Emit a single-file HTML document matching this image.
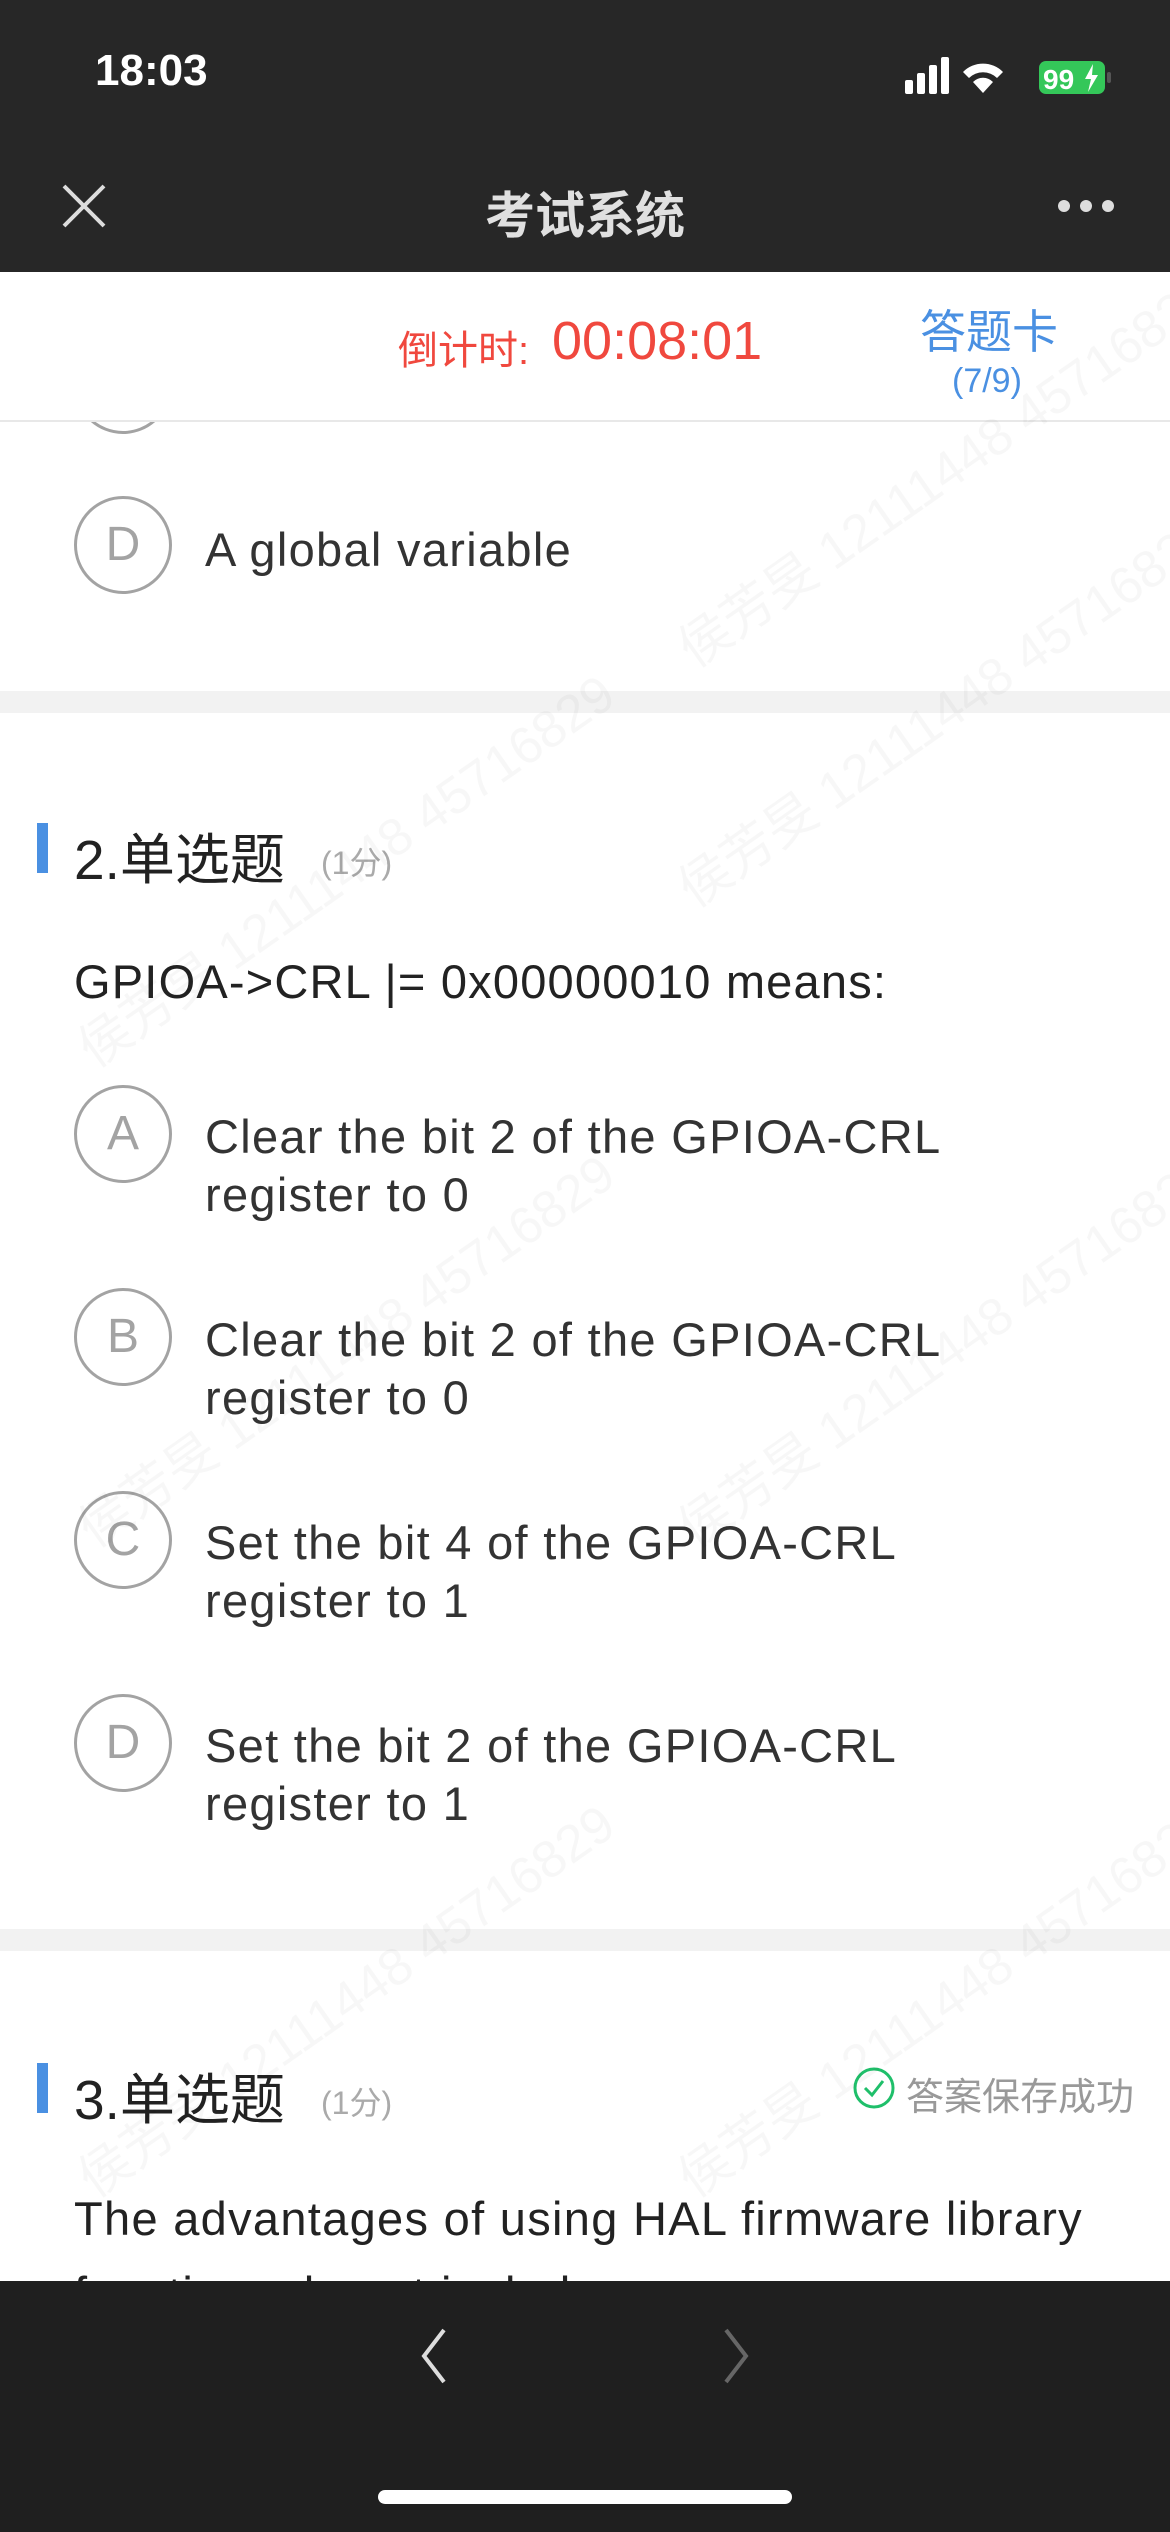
<!DOCTYPE html>
<html><head><meta charset="utf-8"><style>
*{margin:0;padding:0;box-sizing:border-box}
body{width:1170px;height:2532px;position:relative;overflow:hidden;background:#fff;font-family:"Liberation Sans","Noto Sans CJK SC",sans-serif;color:#333}
.a{position:absolute;white-space:nowrap}
.circ{position:absolute;width:98px;height:98px;border:3px solid #a3a3a3;border-radius:50%;color:#a3a3a3;font-size:48px;text-align:center;line-height:92px}
.opt{position:absolute;left:205px;font-size:47px;letter-spacing:1.3px;line-height:58px;color:#333}
.wm{position:absolute;color:rgba(0,0,0,0.03);font-size:52px;transform:rotate(-35deg);white-space:nowrap;transform-origin:left top}
</style></head><body>
<div class="a" style="left:0;top:0;width:1170px;height:272px;background:#272727"></div>
<div class="a" style="left:95px;top:46px;font-size:44px;color:#fff;font-weight:bold">18:03</div>
<svg class="a" style="left:905px;top:52px" width="210" height="46" viewBox="0 0 210 46">
<rect x="0" y="28" width="8" height="14" rx="2" fill="#fff"/><rect x="12" y="21" width="8" height="21" rx="2" fill="#fff"/><rect x="24" y="13" width="8" height="29" rx="2" fill="#fff"/><rect x="36" y="5" width="8" height="37" rx="2" fill="#fff"/>
<path d="M58 20 A28 28 0 0 1 98 20 L92 26 A20 20 0 0 0 64 26Z M68 30 A14 14 0 0 1 88 30 L78 41Z" fill="#fff"/>
<rect x="134" y="9" width="66" height="33" rx="7" fill="#34c759"/><rect x="202" y="20" width="4" height="11" rx="2" fill="#555"/>
<text x="138" y="37" font-size="28" font-weight="bold" fill="#fff" font-family="Liberation Sans">99</text><path d="M188 12 L180 27 L186 27 L183 40 L193 23 L187 23Z" fill="#fff"/>
</svg>
<svg class="a" style="left:62px;top:184px" width="44" height="44"><path d="M2 2L42 42M42 2L2 42" stroke="#ddd" stroke-width="4"/></svg>
<div class="a" style="left:0;width:1170px;top:176px;text-align:center;font-size:50px;color:#e0e0e0;font-weight:bold">考试系统</div>
<svg class="a" style="left:1058px;top:198px" width="56" height="16"><circle cx="6" cy="8" r="6" fill="#ddd"/><circle cx="28" cy="8" r="6" fill="#ddd"/><circle cx="50" cy="8" r="6" fill="#ddd"/></svg>
<div class="a" style="left:0;top:420px;width:1170px;height:2px;background:#e8e8e8"></div>
<div class="a" style="left:398px;top:318px;font-size:40px;color:#f0483e">倒计时:</div>
<div class="a" style="left:552px;top:310px;font-size:54px;color:#f0483e">00:08:01</div>
<div class="a" style="left:920px;top:296px;font-size:46px;color:#4a90e2">答题卡</div>
<div class="a" style="left:952px;top:362px;font-size:34px;color:#4a90e2">(7/9)</div>
<div class="circ" style="left:74px;top:336px;clip-path:inset(86px 0 0 0)"></div>
<div class="circ" style="left:74px;top:496px">D</div>
<div class="opt" style="top:521px">A global variable</div>
<div class="a" style="left:0;top:691px;width:1170px;height:22px;background:#f2f2f2"></div>
<div class="a" style="left:37px;top:823px;width:11px;height:50px;background:#4a90e2"></div>
<div class="a" style="left:74px;top:815px;font-size:55px;color:#222">2.单选题</div>
<div class="a" style="left:321px;top:838px;font-size:32px;color:#aaa">(1分)</div>
<div class="a" style="left:74px;top:954px;font-size:47px;letter-spacing:1.2px;color:#222">GPIOA-&gt;CRL |= 0x00000010 means:</div>
<div class="circ" style="left:74px;top:1085px">A</div>
<div class="opt" style="top:1108px">Clear the bit 2 of the GPIOA-CRL<br>register to 0</div>
<div class="circ" style="left:74px;top:1288px">B</div>
<div class="opt" style="top:1311px">Clear the bit 2 of the GPIOA-CRL<br>register to 0</div>
<div class="circ" style="left:74px;top:1491px">C</div>
<div class="opt" style="top:1514px">Set the bit 4 of the GPIOA-CRL<br>register to 1</div>
<div class="circ" style="left:74px;top:1694px">D</div>
<div class="opt" style="top:1717px">Set the bit 2 of the GPIOA-CRL<br>register to 1</div>
<div class="a" style="left:0;top:1929px;width:1170px;height:22px;background:#f2f2f2"></div>
<div class="a" style="left:37px;top:2063px;width:11px;height:50px;background:#4a90e2"></div>
<div class="a" style="left:74px;top:2055px;font-size:55px;color:#222">3.单选题</div>
<div class="a" style="left:321px;top:2078px;font-size:32px;color:#aaa">(1分)</div>
<svg class="a" style="left:852px;top:2066px" width="44" height="44"><circle cx="22" cy="22" r="19" fill="none" stroke="#1fbf6a" stroke-width="3"/><path d="M13 22L20 29L31 15" fill="none" stroke="#1fbf6a" stroke-width="3"/></svg>
<div class="a" style="left:906px;top:2066px;font-size:38px;color:#999">答案保存成功</div>
<div class="a" style="left:74px;top:2191px;font-size:47px;letter-spacing:1.3px;color:#222">The advantages of using HAL firmware library</div>
<div class="a" style="left:74px;top:2266px;font-size:47px;letter-spacing:1.3px;color:#222">functions do not include</div>
<div class="wm" style="left:60px;top:1020px">侯芳旻 12111448 45716829</div>
<div class="wm" style="left:660px;top:860px">侯芳旻 12111448 45716829</div>
<div class="wm" style="left:60px;top:1500px">侯芳旻 12111448 45716829</div>
<div class="wm" style="left:660px;top:1500px">侯芳旻 12111448 45716829</div>
<div class="wm" style="left:60px;top:2150px">侯芳旻 12111448 45716829</div>
<div class="wm" style="left:660px;top:2150px">侯芳旻 12111448 45716829</div>
<div class="wm" style="left:660px;top:620px">侯芳旻 12111448 45716829</div>
<div class="a" style="left:0;top:2281px;width:1170px;height:251px;background:#1f1f1f"></div>
<svg class="a" style="left:416px;top:2326px" width="36" height="60"><path d="M28 4L8 30L28 56" fill="none" stroke="#ddd" stroke-width="4"/></svg>
<svg class="a" style="left:718px;top:2326px" width="36" height="60"><path d="M8 4L28 30L8 56" fill="none" stroke="#666" stroke-width="4"/></svg>
<div class="a" style="left:378px;top:2490px;width:414px;height:14px;border-radius:7px;background:#fff"></div>
</body></html>
